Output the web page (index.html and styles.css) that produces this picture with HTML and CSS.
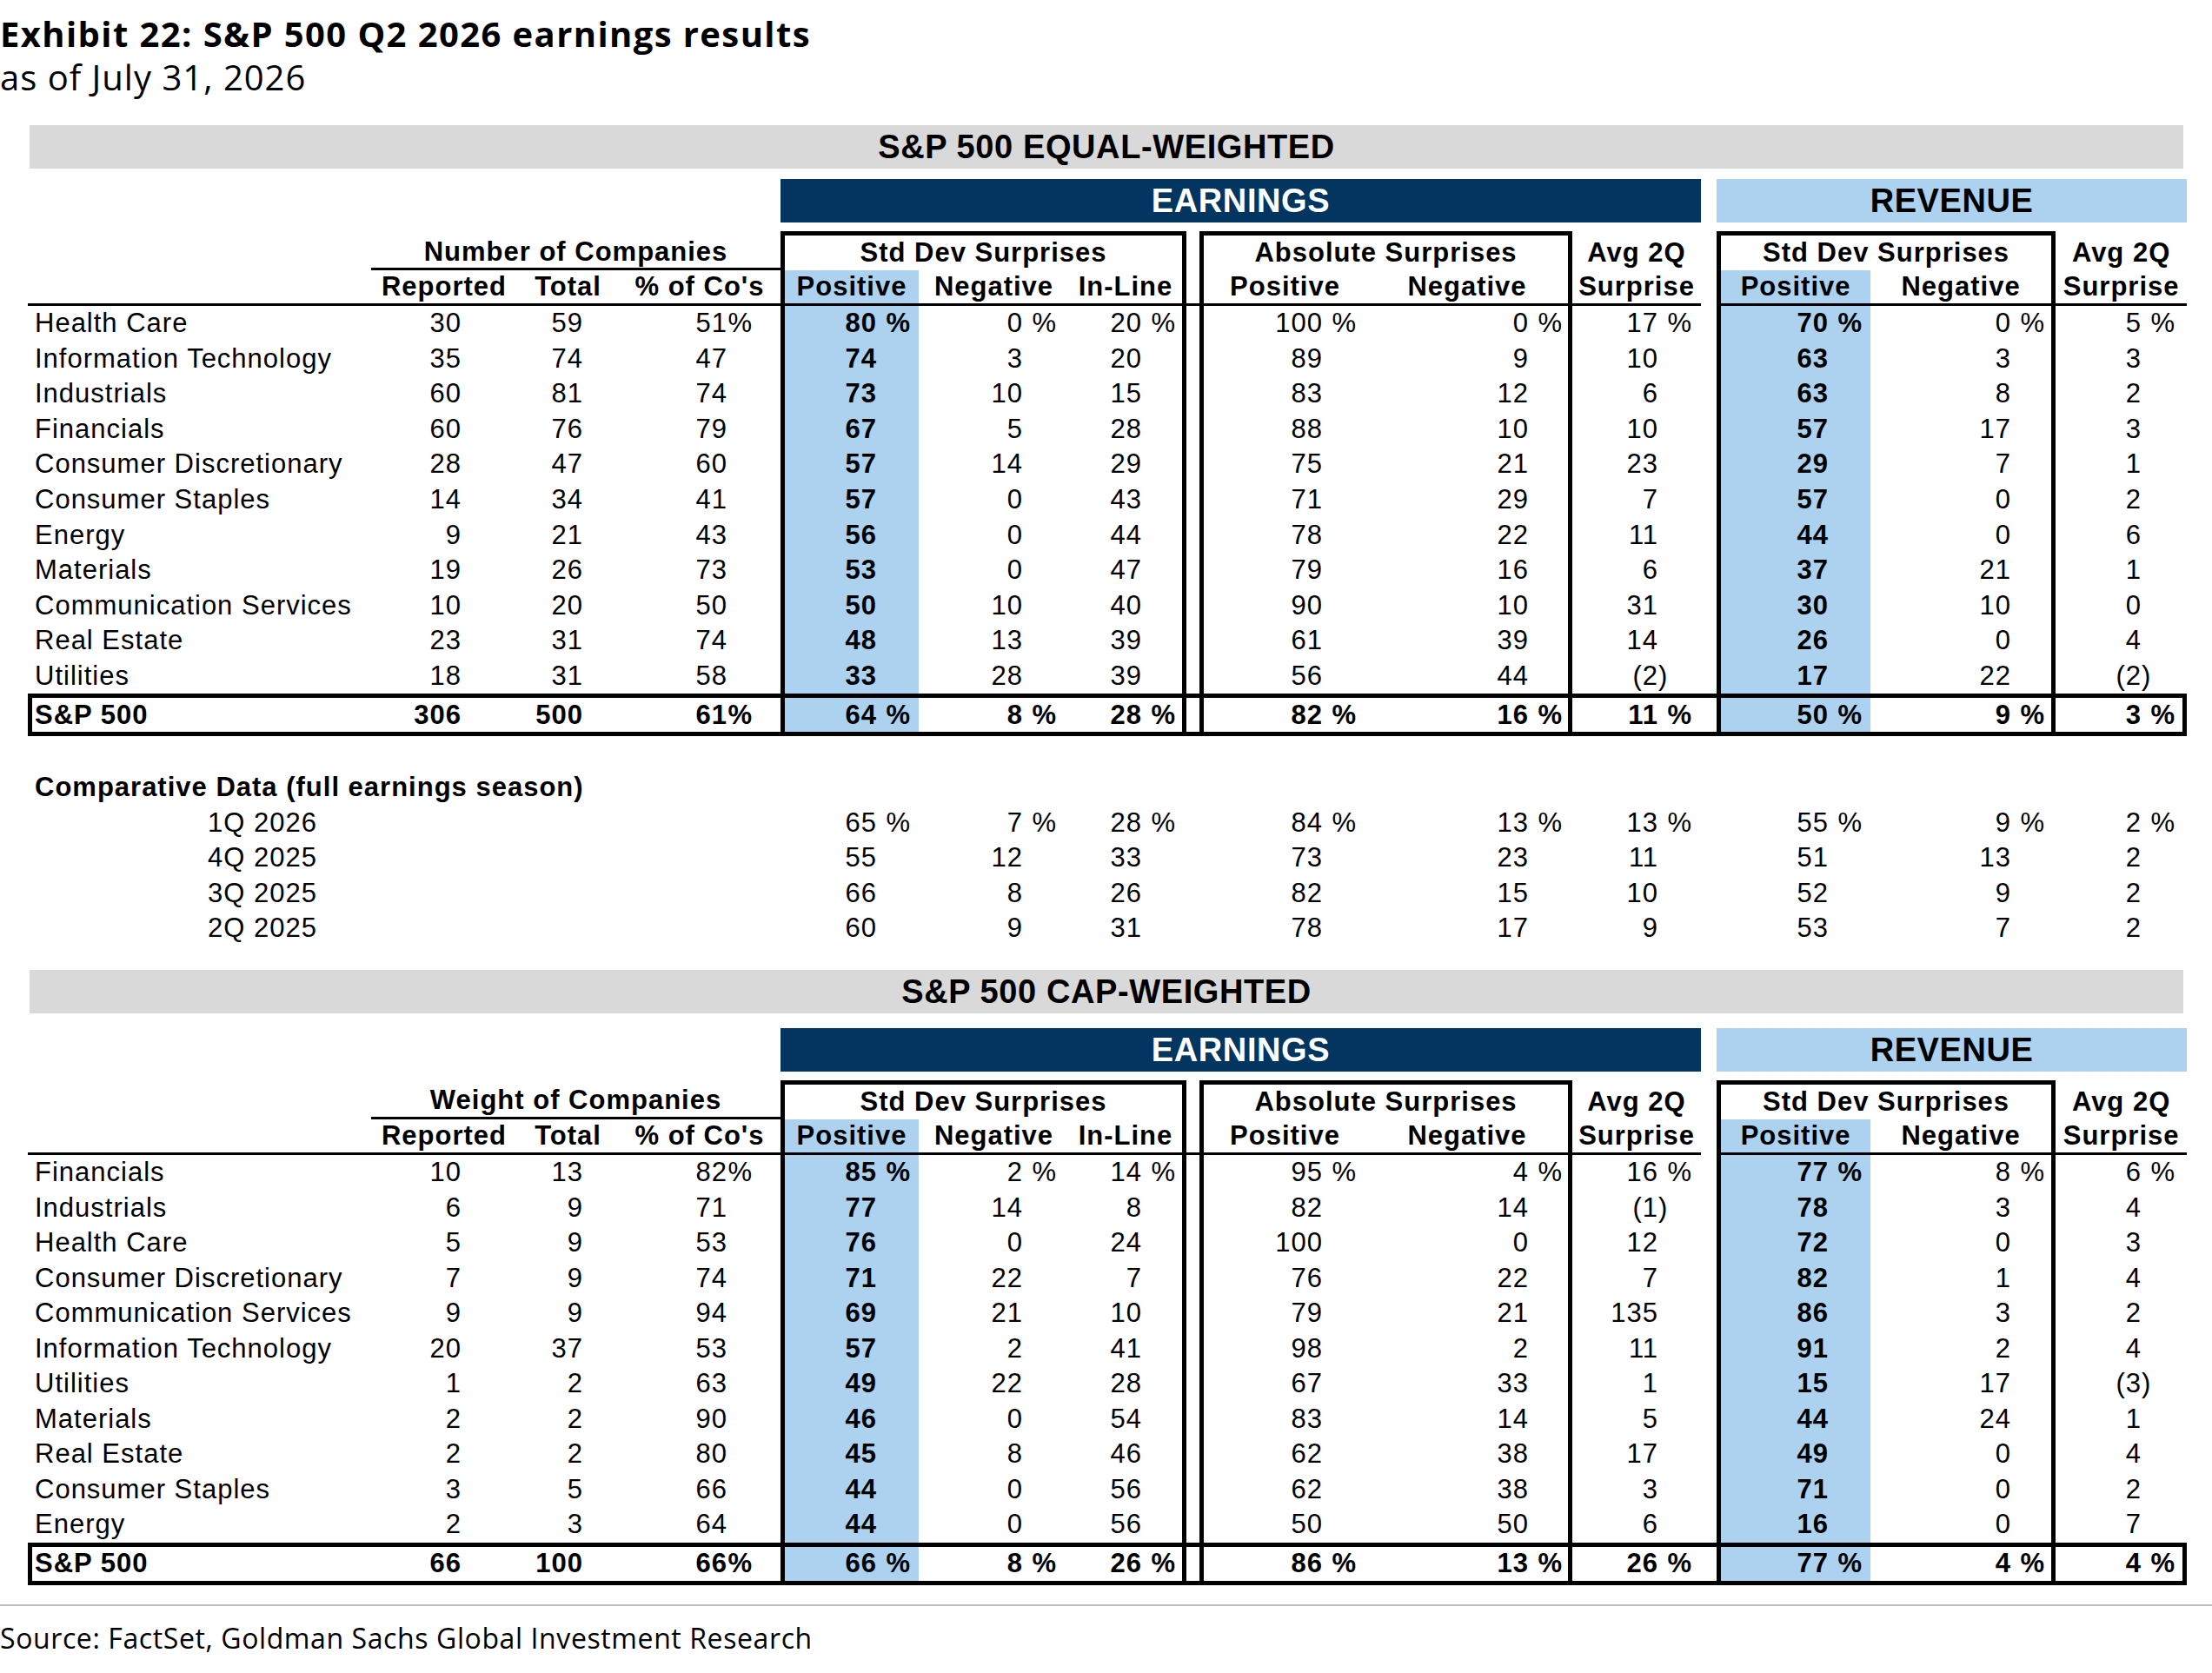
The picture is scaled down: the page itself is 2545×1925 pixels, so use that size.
FILE: index.html
```html
<!DOCTYPE html>
<html lang="en">
<head>
    <meta charset="UTF-8">
    <meta name="viewport" content="width=device-width, initial-scale=1.0">
    <title>Exhibit 22: S&amp;P 500 Q2 2026 earnings results</title>
    <link rel="stylesheet" href="styles.css">
</head>
<body>
    <div class="head">
        <h1>Exhibit 22: S&amp;P 500 Q2 2026 earnings results</h1>
        <p>as of July 31, 2026</p>
    </div>

    <!-- equal weighted -->
    <div class="section">
        <div class="band">S&amp;P 500 EQUAL-WEIGHTED</div>
        <table class="grid">
            <colgroup>
                <col class="c-lbl"><col class="c-rep"><col class="c-tot"><col class="c-pct">
                <col class="c-pos"><col class="c-neg"><col class="c-inl"><col class="c-gap">
                <col class="c-apos"><col class="c-aneg"><col class="c-avg"><col class="c-gap2">
                <col class="c-rpos"><col class="c-rneg"><col class="c-ravg">
            </colgroup>
            <tr class="bars">
                <td colspan="4"></td><td colspan="7" class="earn">EARNINGS</td><td></td><td colspan="3" class="rev">REVENUE</td>
            </tr>
            <tr class="spacer"><td colspan="15"></td></tr>
            <tr class="h1">
                <td></td>
                <td colspan="3" class="grp">Number of Companies</td>
                <td colspan="3" class="box">Std Dev Surprises</td>
                <td></td>
                <td colspan="2" class="box">Absolute Surprises</td>
                <td>Avg 2Q</td>
                <td></td>
                <td colspan="2" class="box">Std Dev Surprises</td>
                <td>Avg 2Q</td>
            </tr>
            <tr class="h2">
                <td></td><td>Reported</td><td>Total</td><td>% of Co's</td>
                <td class="bl pos">Positive</td><td>Negative</td><td class="br">In-Line</td>
                <td></td>
                <td class="bl">Positive</td><td class="br">Negative</td><td>Surprise</td>
                <td class="gap"></td>
                <td class="bl pos">Positive</td><td class="br">Negative</td><td>Surprise</td>
            </tr>
            <tr class="row ln"><td>Health Care</td><td>30</td><td>59</td><td>51<i class="q">%</i></td><td>80<i>%</i></td><td>0<i>%</i></td><td>20<i>%</i></td><td></td><td>100<i>%</i></td><td>0<i>%</i></td><td>17<i>%</i></td><td></td><td>70<i>%</i></td><td>0<i>%</i></td><td>5<i>%</i></td></tr>
            <tr class="row ln"><td>Information Technology</td><td>35</td><td>74</td><td>47</td><td>74</td><td>3</td><td>20</td><td></td><td>89</td><td>9</td><td>10</td><td></td><td>63</td><td>3</td><td>3</td></tr>
            <tr class="row ln"><td>Industrials</td><td>60</td><td>81</td><td>74</td><td>73</td><td>10</td><td>15</td><td></td><td>83</td><td>12</td><td>6</td><td></td><td>63</td><td>8</td><td>2</td></tr>
            <tr class="row ln"><td>Financials</td><td>60</td><td>76</td><td>79</td><td>67</td><td>5</td><td>28</td><td></td><td>88</td><td>10</td><td>10</td><td></td><td>57</td><td>17</td><td>3</td></tr>
            <tr class="row ln"><td>Consumer Discretionary</td><td>28</td><td>47</td><td>60</td><td>57</td><td>14</td><td>29</td><td></td><td>75</td><td>21</td><td>23</td><td></td><td>29</td><td>7</td><td>1</td></tr>
            <tr class="row ln"><td>Consumer Staples</td><td>14</td><td>34</td><td>41</td><td>57</td><td>0</td><td>43</td><td></td><td>71</td><td>29</td><td>7</td><td></td><td>57</td><td>0</td><td>2</td></tr>
            <tr class="row ln"><td>Energy</td><td>9</td><td>21</td><td>43</td><td>56</td><td>0</td><td>44</td><td></td><td>78</td><td>22</td><td>11</td><td></td><td>44</td><td>0</td><td>6</td></tr>
            <tr class="row ln"><td>Materials</td><td>19</td><td>26</td><td>73</td><td>53</td><td>0</td><td>47</td><td></td><td>79</td><td>16</td><td>6</td><td></td><td>37</td><td>21</td><td>1</td></tr>
            <tr class="row ln"><td>Communication Services</td><td>10</td><td>20</td><td>50</td><td>50</td><td>10</td><td>40</td><td></td><td>90</td><td>10</td><td>31</td><td></td><td>30</td><td>10</td><td>0</td></tr>
            <tr class="row ln"><td>Real Estate</td><td>23</td><td>31</td><td>74</td><td>48</td><td>13</td><td>39</td><td></td><td>61</td><td>39</td><td>14</td><td></td><td>26</td><td>0</td><td>4</td></tr>
            <tr class="row ln"><td>Utilities</td><td>18</td><td>31</td><td>58</td><td>33</td><td>28</td><td>39</td><td></td><td>56</td><td>44</td><td>(2<i class="c">)</i></td><td></td><td>17</td><td>22</td><td>(2<i class="c">)</i></td></tr>
            <tr class="row ln tot"><td>S&amp;P 500</td><td>306</td><td>500</td><td>61<i class="q">%</i></td><td>64<i>%</i></td><td>8<i>%</i></td><td>28<i>%</i></td><td></td><td>82<i>%</i></td><td>16<i>%</i></td><td>11<i>%</i></td><td></td><td>50<i>%</i></td><td>9<i>%</i></td><td>3<i>%</i></td></tr>
            <tr class="blank"><td colspan="15"></td></tr>
            <tr class="ctitle"><td colspan="15">Comparative Data (full earnings season)</td></tr>
            <tr class="row cmp"><td>1Q 2026</td><td></td><td></td><td></td><td>65<i>%</i></td><td>7<i>%</i></td><td>28<i>%</i></td><td></td><td>84<i>%</i></td><td>13<i>%</i></td><td>13<i>%</i></td><td></td><td>55<i>%</i></td><td>9<i>%</i></td><td>2<i>%</i></td></tr>
            <tr class="row cmp"><td>4Q 2025</td><td></td><td></td><td></td><td>55</td><td>12</td><td>33</td><td></td><td>73</td><td>23</td><td>11</td><td></td><td>51</td><td>13</td><td>2</td></tr>
            <tr class="row cmp"><td>3Q 2025</td><td></td><td></td><td></td><td>66</td><td>8</td><td>26</td><td></td><td>82</td><td>15</td><td>10</td><td></td><td>52</td><td>9</td><td>2</td></tr>
            <tr class="row cmp"><td>2Q 2025</td><td></td><td></td><td></td><td>60</td><td>9</td><td>31</td><td></td><td>78</td><td>17</td><td>9</td><td></td><td>53</td><td>7</td><td>2</td></tr>
        </table>
    </div>

    <!-- cap weighted -->
    <div class="section cap">
        <div class="band">S&amp;P 500 CAP-WEIGHTED</div>
        <table class="grid">
            <colgroup>
                <col class="c-lbl"><col class="c-rep"><col class="c-tot"><col class="c-pct">
                <col class="c-pos"><col class="c-neg"><col class="c-inl"><col class="c-gap">
                <col class="c-apos"><col class="c-aneg"><col class="c-avg"><col class="c-gap2">
                <col class="c-rpos"><col class="c-rneg"><col class="c-ravg">
            </colgroup>
            <tr class="bars">
                <td colspan="4"></td><td colspan="7" class="earn">EARNINGS</td><td></td><td colspan="3" class="rev">REVENUE</td>
            </tr>
            <tr class="spacer"><td colspan="15"></td></tr>
            <tr class="h1">
                <td></td>
                <td colspan="3" class="grp">Weight of Companies</td>
                <td colspan="3" class="box">Std Dev Surprises</td>
                <td></td>
                <td colspan="2" class="box">Absolute Surprises</td>
                <td>Avg 2Q</td>
                <td></td>
                <td colspan="2" class="box">Std Dev Surprises</td>
                <td>Avg 2Q</td>
            </tr>
            <tr class="h2">
                <td></td><td>Reported</td><td>Total</td><td>% of Co's</td>
                <td class="bl pos">Positive</td><td>Negative</td><td class="br">In-Line</td>
                <td></td>
                <td class="bl">Positive</td><td class="br">Negative</td><td>Surprise</td>
                <td class="gap"></td>
                <td class="bl pos">Positive</td><td class="br">Negative</td><td>Surprise</td>
            </tr>
            <tr class="row ln"><td>Financials</td><td>10</td><td>13</td><td>82<i class="q">%</i></td><td>85<i>%</i></td><td>2<i>%</i></td><td>14<i>%</i></td><td></td><td>95<i>%</i></td><td>4<i>%</i></td><td>16<i>%</i></td><td></td><td>77<i>%</i></td><td>8<i>%</i></td><td>6<i>%</i></td></tr>
            <tr class="row ln"><td>Industrials</td><td>6</td><td>9</td><td>71</td><td>77</td><td>14</td><td>8</td><td></td><td>82</td><td>14</td><td>(1<i class="c">)</i></td><td></td><td>78</td><td>3</td><td>4</td></tr>
            <tr class="row ln"><td>Health Care</td><td>5</td><td>9</td><td>53</td><td>76</td><td>0</td><td>24</td><td></td><td>100</td><td>0</td><td>12</td><td></td><td>72</td><td>0</td><td>3</td></tr>
            <tr class="row ln"><td>Consumer Discretionary</td><td>7</td><td>9</td><td>74</td><td>71</td><td>22</td><td>7</td><td></td><td>76</td><td>22</td><td>7</td><td></td><td>82</td><td>1</td><td>4</td></tr>
            <tr class="row ln"><td>Communication Services</td><td>9</td><td>9</td><td>94</td><td>69</td><td>21</td><td>10</td><td></td><td>79</td><td>21</td><td>135</td><td></td><td>86</td><td>3</td><td>2</td></tr>
            <tr class="row ln"><td>Information Technology</td><td>20</td><td>37</td><td>53</td><td>57</td><td>2</td><td>41</td><td></td><td>98</td><td>2</td><td>11</td><td></td><td>91</td><td>2</td><td>4</td></tr>
            <tr class="row ln"><td>Utilities</td><td>1</td><td>2</td><td>63</td><td>49</td><td>22</td><td>28</td><td></td><td>67</td><td>33</td><td>1</td><td></td><td>15</td><td>17</td><td>(3<i class="c">)</i></td></tr>
            <tr class="row ln"><td>Materials</td><td>2</td><td>2</td><td>90</td><td>46</td><td>0</td><td>54</td><td></td><td>83</td><td>14</td><td>5</td><td></td><td>44</td><td>24</td><td>1</td></tr>
            <tr class="row ln"><td>Real Estate</td><td>2</td><td>2</td><td>80</td><td>45</td><td>8</td><td>46</td><td></td><td>62</td><td>38</td><td>17</td><td></td><td>49</td><td>0</td><td>4</td></tr>
            <tr class="row ln"><td>Consumer Staples</td><td>3</td><td>5</td><td>66</td><td>44</td><td>0</td><td>56</td><td></td><td>62</td><td>38</td><td>3</td><td></td><td>71</td><td>0</td><td>2</td></tr>
            <tr class="row ln"><td>Energy</td><td>2</td><td>3</td><td>64</td><td>44</td><td>0</td><td>56</td><td></td><td>50</td><td>50</td><td>6</td><td></td><td>16</td><td>0</td><td>7</td></tr>
            <tr class="row ln tot"><td>S&amp;P 500</td><td>66</td><td>100</td><td>66<i class="q">%</i></td><td>66<i>%</i></td><td>8<i>%</i></td><td>26<i>%</i></td><td></td><td>86<i>%</i></td><td>13<i>%</i></td><td>26<i>%</i></td><td></td><td>77<i>%</i></td><td>4<i>%</i></td><td>4<i>%</i></td></tr>
        </table>
    </div>

    <div class="rule"></div>
    <p class="source">Source: FactSet, Goldman Sachs Global Investment Research</p>
</body>
</html>
```

FILE: styles.css
```css
* {
    box-sizing: border-box;
}
body {
    margin: 0;
    background: #fff;
    color: #000;
    font-family: "Liberation Sans", Arial, sans-serif;
}

/* title block */
.head {
    padding-top: 14px;
    font-family: "Open Sans", Lato, sans-serif;
}
.head h1 {
    margin: 0;
    font-size: 40px;
    line-height: 50px;
    font-weight: bold;
    letter-spacing: 1.4px;
}
.head p {
    margin: 0;
    font-size: 40px;
    line-height: 50px;
    letter-spacing: 1px;
}

.section {
    width: 2484px;
    margin: 30px 0 0 32px;
}
.section.cap {
    margin-top: 27px;
}
.band {
    margin: 0 4px 12px 2px;
    height: 50px;
    line-height: 50px;
    background: #d9d9d9;
    text-align: center;
    font-size: 38px;
    font-weight: bold;
    letter-spacing: .6px;
}
.cap .band {
    margin-bottom: 17px;
}

/* table */
.grid {
    width: 2484px;
    table-layout: fixed;
    border-collapse: separate;
    border-spacing: 0;
    font-size: 31px;
    letter-spacing: 1px;
}
.grid td {
    padding: 0;
    white-space: nowrap;
    vertical-align: middle;
    line-height: 34px;
}
.c-lbl { width: 395px; }
.c-rep { width: 168px; }
.c-tot { width: 117px; }
.c-pct { width: 186px; }
.c-pos { width: 159px; }
.c-neg { width: 173px; }
.c-inl { width: 135px; }
.c-gap { width: 15px; }
.c-apos { width: 192px; }
.c-aneg { width: 237px; }
.c-avg { width: 148px; }
.c-gap2 { width: 18px; }
.c-rpos { width: 177px; }
.c-rneg { width: 213px; }
.c-ravg { width: 151px; }

.bars { height: 50px; }
.bars td {
    text-align: center;
    font-size: 38px;
    font-weight: bold;
    letter-spacing: .6px;
}
.bars .earn {
    background: #023560;
    color: #fff;
}
.bars .rev {
    background: #acd2ef;
}
.spacer { height: 10px; }

.h1 { height: 45px; }
.h2 { height: 41px; }
.h1 td, .h2 td {
    text-align: center;
    font-weight: bold;
}
.h1 td {
    border-top: 5px solid transparent;
}
.h1 .grp {
    border-bottom: 3px solid #000;
}
.h1 .box {
    border: 5px solid #000;
    border-bottom: 0;
}
.h2 td {
    border-bottom: 3px solid #000;
}
.h2 .bl { border-left: 5px solid #000; }
.h2 .br { border-right: 5px solid #000; }
.h2 .pos { background: #acd2ef; }
.h2 .gap { border-bottom: 0; }

/* body rows */
.row { height: 40.55px; }
.row td {
    border: 0 solid transparent;
    text-align: right;
}
.row td:nth-child(1) { text-align: left; padding-left: 8px; }
.row td:nth-child(2) { padding-right: 64px; }
.row td:nth-child(3) { padding-right: 41px; }
.row td:nth-child(4) { padding-right: 61px; }
.row td:nth-child(5) { padding-right: 48px; border-left-width: 5px; }
.row td:nth-child(6) { padding-right: 53px; }
.row td:nth-child(7) { padding-right: 46px; border-right-width: 5px; }
.row td:nth-child(9) { padding-right: 50px; border-left-width: 5px; }
.row td:nth-child(10) { padding-right: 45px; border-right-width: 5px; }
.row td:nth-child(11) { padding-right: 49px; }
.row td:nth-child(13) { padding-right: 48px; border-left-width: 5px; }
.row td:nth-child(14) { padding-right: 46px; border-right-width: 5px; }
.row td:nth-child(15) { padding-right: 47px; border-right-width: 5px; }

.ln td:nth-child(5), .ln td:nth-child(9), .ln td:nth-child(13) {
    border-left-color: #000;
}
.ln td:nth-child(7), .ln td:nth-child(10), .ln td:nth-child(14) {
    border-right-color: #000;
}
.ln td:nth-child(5), .ln td:nth-child(13) {
    background: #acd2ef;
    font-weight: bold;
}

.tot { height: 49px; }
.tot td {
    border-color: #000;
    border-top-width: 5px;
    border-bottom-width: 5px;
    font-weight: bold;
}
.tot td:first-child {
    border-left-width: 5px;
    padding-left: 3px;
}

.blank { height: 39px; }
.ctitle { height: 40.55px; }
.ctitle td {
    padding-left: 8px;
    font-weight: bold;
}
.cmp td:first-child {
    padding-left: 207px;
}

/* trailing % and ) hang past the digits */
.grid i {
    display: inline-block;
    width: 39px;
    margin-right: -39px;
    font-style: normal;
    text-align: right;
}
.grid i.q {
    width: 29px;
    margin-right: -29px;
}
.grid i.c {
    text-align: left;
}

.rule {
    margin-top: 22px;
    height: 2px;
    background: #bdbdbd;
}
.source {
    margin: 17px 0 0;
    font-family: "Open Sans", Lato, sans-serif;
    font-size: 32px;
    line-height: 40px;
    letter-spacing: .6px;
}
```
